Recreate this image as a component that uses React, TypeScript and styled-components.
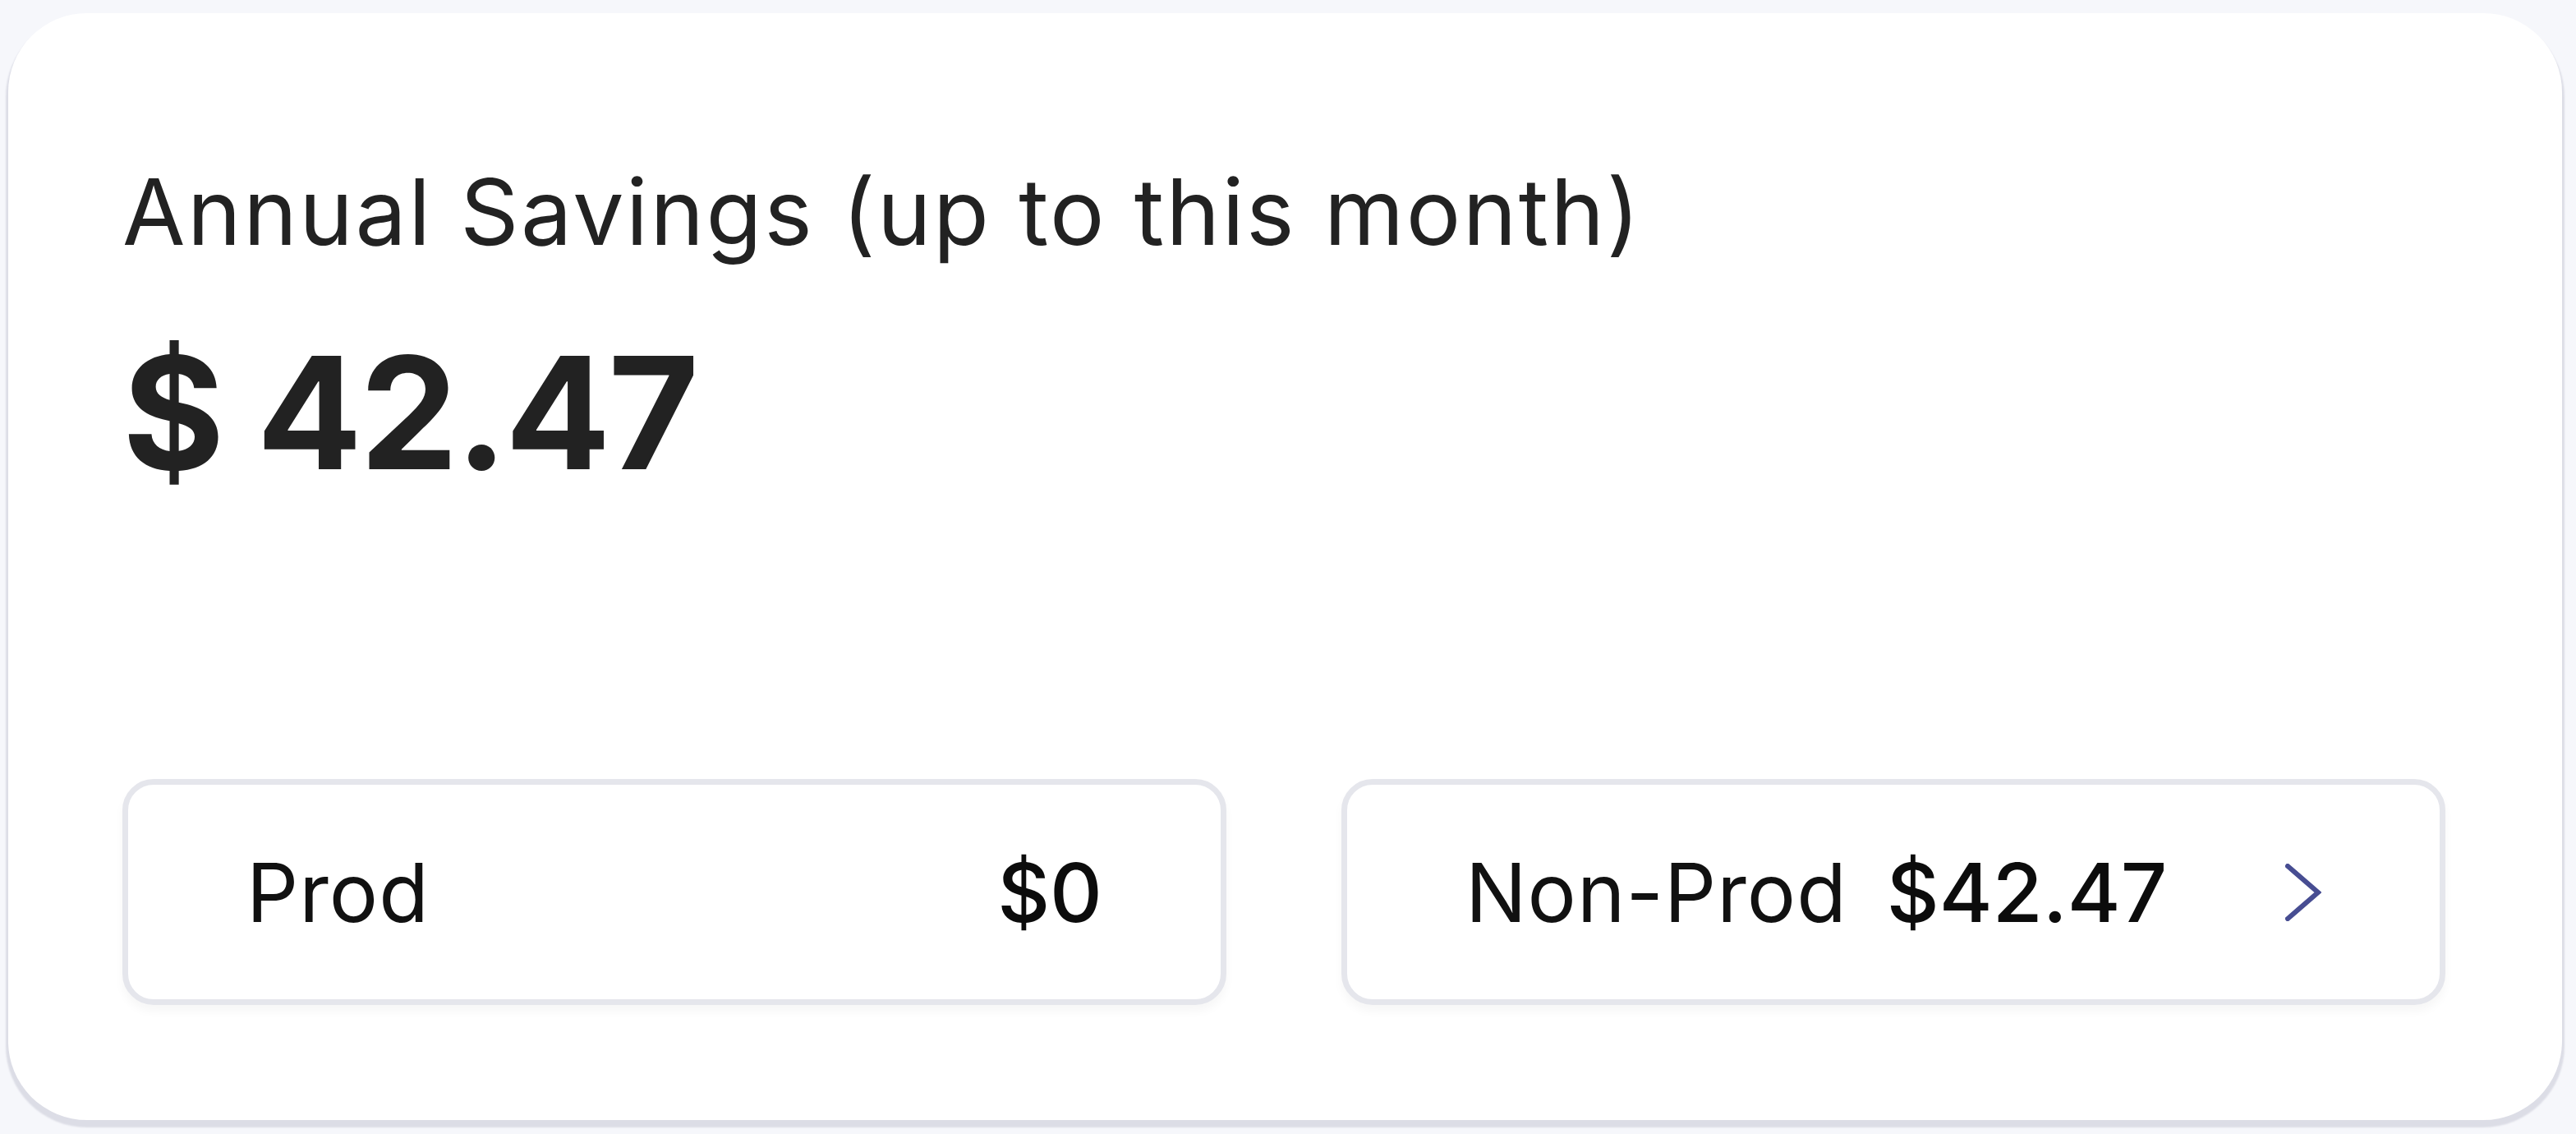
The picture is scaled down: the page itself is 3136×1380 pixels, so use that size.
import React from "react";
import styled, { createGlobalStyle } from "styled-components";

const GlobalStyle = createGlobalStyle`
  html, body {
    margin: 0;
    padding: 0;
    background: #f6f7fb;
  }
  body {
    font-family: "Inter", "Noto Sans", sans-serif;
    color: #222222;
  }
`;

const Page = styled.div`
  box-sizing: border-box;
  width: 3136px;
  height: 1380px;
  padding: 16px 17px 0 10px;
  background: #f6f7fb;
`;

const Card = styled.section`
  box-sizing: border-box;
  height: 1347px;
  background: #ffffff;
  border-radius: 96px;
  box-shadow: 0 6px 2px 3px #dcdde6;
  padding: 175px 142px 140px 139px;
  display: flex;
  flex-direction: column;
`;

const Title = styled.h2`
  margin: 0;
  font-size: 111px;
  line-height: 133px;
  font-weight: 400;
  color: #222222;
  letter-spacing: 2.5px;
`;

const Amount = styled.div`
  margin-top: 64px;
  font-size: 190px;
  line-height: 228px;
  font-weight: 700;
  color: #222222;
  letter-spacing: -3px;
`;

const Breakdown = styled.div`
  margin-top: auto;
  display: grid;
  grid-template-columns: 1fr 1fr;
  column-gap: 140px;
`;

const Segment = styled.div<{ $clickable?: boolean }>`
  box-sizing: border-box;
  height: 275px;
  border: 7px solid #e5e6ec;
  border-radius: 38px;
  background: #ffffff;
  box-shadow: 0 8px 12px rgba(0, 0, 0, 0.035);
  padding: 0 144px;
  display: flex;
  align-items: center;
  justify-content: ${(p) => (p.$clickable ? "flex-start" : "space-between")};
  cursor: ${(p) => (p.$clickable ? "pointer" : "default")};
`;

const Label = styled.span`
  font-size: 99px;
  line-height: 120px;
  font-weight: 400;
  color: #111111;
  letter-spacing: 1px;
`;

const Value = styled.span<{ $inline?: boolean }>`
  font-size: 99px;
  line-height: 120px;
  font-weight: 500;
  color: #0c0c0c;
  letter-spacing: 0;
  margin-left: ${(p) => (p.$inline ? "48px" : "0")};
`;

const Chevron = styled.svg`
  margin-left: auto;
  width: 44px;
  height: 70px;
  flex: none;
`;

export default function App() {
  return (
    <>
      <GlobalStyle />
      <Page>
        <Card>
          <Title>Annual Savings (up to this month)</Title>
          <Amount>$ 42.47</Amount>
          <Breakdown>
            <Segment>
              <Label>Prod</Label>
              <Value>$0</Value>
            </Segment>
            <Segment $clickable>
              <Label>Non-Prod</Label>
              <Value $inline>$42.47</Value>
              <Chevron viewBox="0 0 44 70" fill="none">
                <polyline
                  points="3,3 40,35 3,67"
                  stroke="#474d92"
                  strokeWidth="6"
                  strokeLinecap="square"
                  strokeLinejoin="miter"
                />
              </Chevron>
            </Segment>
          </Breakdown>
        </Card>
      </Page>
    </>
  );
}
